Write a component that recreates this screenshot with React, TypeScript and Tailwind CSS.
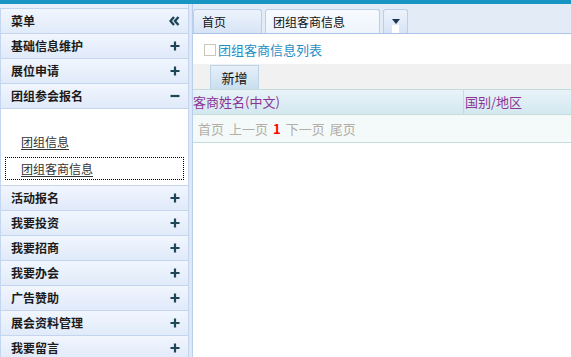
import React from 'react';

const menu = ['活动报名', '我要投资', '我要招商', '我要办会', '广告赞助', '展会资料管理', '我要留言'];

const Plus = () => (
  <svg width="10" height="10" viewBox="0 0 10 10" className="shrink-0">
    <path d="M5 0.5v9M0.5 5h9" stroke="#1d4656" strokeWidth="2.2" />
  </svg>
);

const Minus = () => (
  <svg width="10" height="10" viewBox="0 0 10 10" className="shrink-0">
    <path d="M0.5 5h9" stroke="#1d4656" strokeWidth="2.2" />
  </svg>
);

const Chevrons = () => (
  <svg width="11" height="10" viewBox="0 0 11 10" className="shrink-0">
    <path d="M5 1L1.5 5 5 9M9.5 1L6 5l3.5 4" stroke="#1d4656" strokeWidth="2.4" fill="none" />
  </svg>
);

const Row = ({ label, icon }: { label: string; icon: React.ReactNode }) => (
  <div className="h-[25px] flex items-center justify-between pl-[10px] pr-[8px] border-b border-[#c3d5ef] bg-gradient-to-b from-[#f1f6fe] to-[#e0eaf9] text-[12px] font-bold text-[#1b1b1b]">
    <span>{label}</span>
    {icon}
  </div>
);

const App = () => {
  return (
    <div className="w-[571px] h-[357px] overflow-hidden bg-white" style={{ fontFamily: '"Noto Sans CJK SC", "Noto Sans", sans-serif' }}>
      <div className="h-[4px] bg-[#1995c4]"></div>
      <div className="flex h-[353px]">
        <aside className="w-[189px] bg-[#e9eff8] pt-[4px] border-r border-[#c3d5ef]">
          <div className="border-l border-t border-[#c3d5ef]">
            <Row label="菜单" icon={<Chevrons />} />
            <Row label="基础信息维护" icon={<Plus />} />
            <Row label="展位申请" icon={<Plus />} />
            <Row label="团组参会报名" icon={<Minus />} />
            <div className="h-[77px] bg-white border-b border-[#c3d5ef] pt-[22px] text-[12px] text-[#333]">
              <div className="h-[22px] flex items-center pl-[20px]">
                <span className="underline underline-offset-2">团组信息</span>
              </div>
              <div className="mt-[4px] mx-[4px] h-[23px] flex items-center pl-[15px] border border-dotted border-black">
                <span className="underline underline-offset-2">团组客商信息</span>
              </div>
            </div>
            {menu.map((m) => (
              <Row key={m} label={m} icon={<Plus />} />
            ))}
          </div>
        </aside>
        <div className="w-[4px] bg-[#dde7f5] border-r border-[#b9cfea]"></div>
        <main className="flex-1 flex flex-col">
          <div className="h-[30px] bg-[#e3ebf7] border-b border-[#a9c4e8] flex items-end gap-[3px] pl-0">
            <div className="w-[69px] h-[24px] rounded-t-[3px] border border-b-0 border-[#b9cfea] bg-gradient-to-b from-[#edf3fc] to-[#d7e4f5] text-[12px] text-[#111] pl-[8px] flex items-center">
              首页
            </div>
            <div className="w-[115px] h-[24px] rounded-t-[3px] border border-b-0 border-[#b9cfea] bg-gradient-to-b from-[#f7faff] to-[#eef4fc] text-[12px] text-[#111] pl-[7px] flex items-center">
              团组客商信息
            </div>
            <div className="w-[25px] h-[24px] rounded-t-[3px] border border-b-0 border-[#b9cfea] bg-gradient-to-b from-[#edf3fc] to-[#d7e4f5] flex flex-col items-center pt-[9px]">
              <svg width="8" height="5" viewBox="0 0 8 5">
                <path d="M0 0h8L4 5z" fill="#1f3550" />
              </svg>
              <div className="w-[7px] h-[8px] bg-white mt-[1px]"></div>
            </div>
          </div>
          <div className="h-[30px] flex items-center pl-[11px] gap-[2px] pt-[2px]">
            <span className="w-[12px] h-[12px] border border-[#c9c7b8] bg-white"></span>
            <span className="text-[13px] text-[#1f8fc6]">团组客商信息列表</span>
          </div>
          <div className="h-[25px] bg-[#f1f1f1] pl-[17px]">
            <button className="w-[49px] h-[25px] bg-gradient-to-b from-[#e6f0f9] to-[#c9deef] border border-[#bcd3e6] text-[13px] text-[#111]">
              新增
            </button>
          </div>
          <div className="h-[26px] flex border-y border-[#c4dcdc] bg-gradient-to-b from-[#e8f4f8] to-[#d3e8f0] text-[13px] text-[#8a3596]">
            <div className="w-[271px] border-r border-[#c4dcdc] flex items-center">客商姓名(中文)</div>
            <div className="flex-1 flex items-center pl-[1px]">国别/地区</div>
          </div>
          <div className="h-[28px] flex items-center gap-[5px] pl-[5px] bg-[#f4fafa] border-b border-[#c4dcdc] text-[13px] text-[#b3aea6]">
            <span>首页</span>
            <span>上一页</span>
            <span className="text-[#ff0000] font-bold">1</span>
            <span>下一页</span>
            <span>尾页</span>
          </div>
        </main>
      </div>
    </div>
  );
};

export default App;
